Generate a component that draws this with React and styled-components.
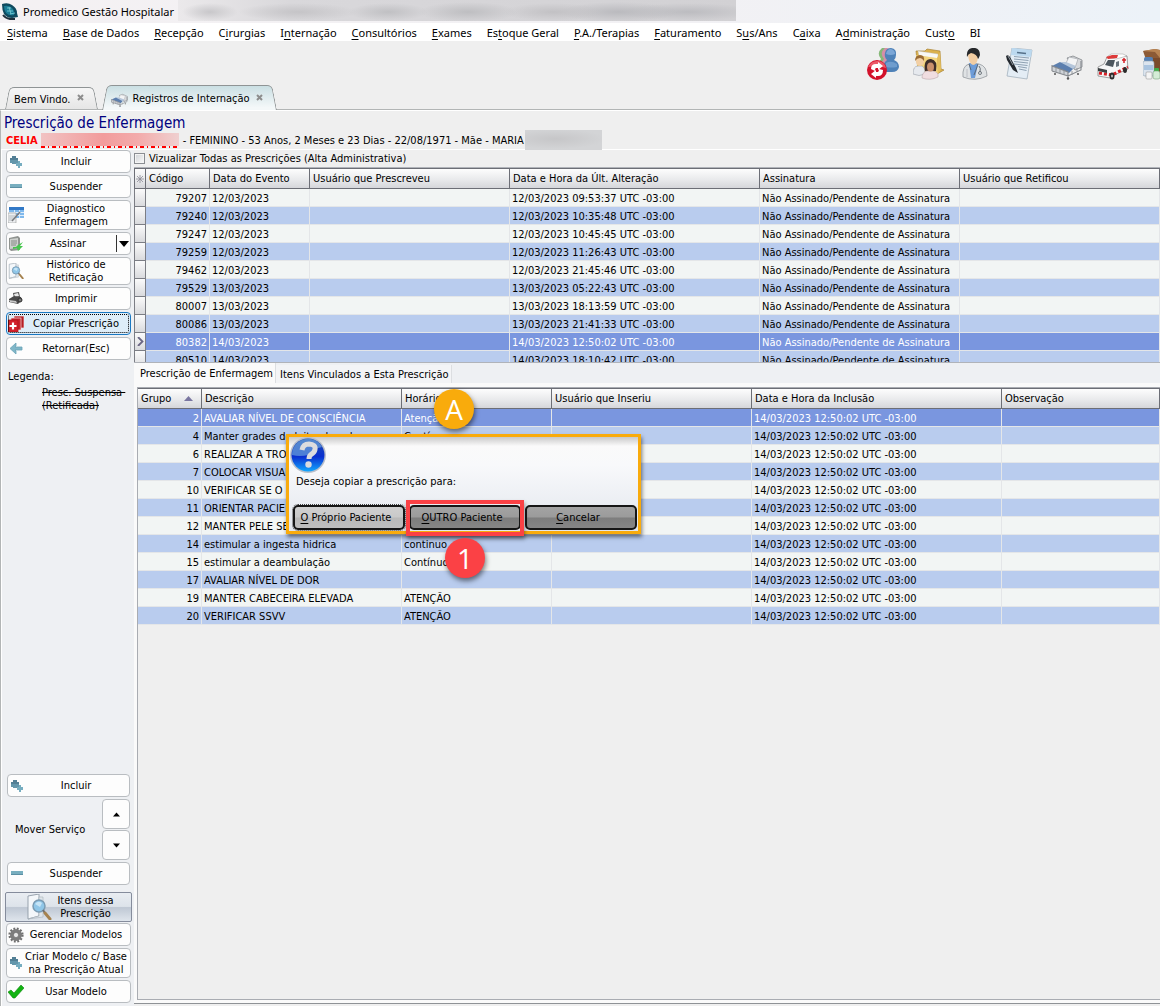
import React, { useState } from 'react';
import styled, { createGlobalStyle, css } from 'styled-components';

const menus = [
  ['', 'S', 'istema'],
  ['', 'B', 'ase de Dados'],
  ['', 'R', 'ecepção'],
  ['C', 'i', 'rurgias'],
  ['I', 'n', 'ternação'],
  ['', 'C', 'onsultórios'],
  ['', 'E', 'xames'],
  ['Es', 't', 'oque Geral'],
  ['', 'P', '.A./Terapias'],
  ['', 'F', 'aturamento'],
  ['S', 'u', 's/Ans'],
  ['C', 'a', 'ixa'],
  ['A', 'd', 'ministração'],
  ['Cust', 'o', ''],
  ['BI', '', ''],
];

const NOT_SIGNED = 'Não Assinado/Pendente de Assinatura';

const prescriptions = [
  { code: 79207, date: '12/03/2023', time: '09:53:37' },
  { code: 79240, date: '12/03/2023', time: '10:35:48' },
  { code: 79247, date: '12/03/2023', time: '10:45:45' },
  { code: 79259, date: '12/03/2023', time: '11:26:43' },
  { code: 79462, date: '12/03/2023', time: '21:45:46' },
  { code: 79529, date: '13/03/2023', time: '05:22:43' },
  { code: 80007, date: '13/03/2023', time: '18:13:59' },
  { code: 80086, date: '13/03/2023', time: '21:41:33' },
  { code: 80382, date: '14/03/2023', time: '12:50:02' },
  { code: 80510, date: '14/03/2023', time: '18:10:42' },
];

const items = [
  { group: 2, text: 'AVALIAR NÍVEL DE CONSCIÊNCIA', when: 'Atenção' },
  { group: 4, text: 'Manter grades do leito elevadas', when: 'Contínuo' },
  { group: 6, text: 'REALIZAR A TROCA', when: '' },
  { group: 7, text: 'COLOCAR VISUAL', when: '' },
  { group: 10, text: 'VERIFICAR SE O', when: '' },
  { group: 11, text: 'ORIENTAR PACIENTE', when: '' },
  { group: 12, text: 'MANTER PELE SECA', when: '' },
  { group: 14, text: 'estimular a ingesta hidrica', when: 'continuo' },
  { group: 15, text: 'estimular a deambulação', when: 'Contínuo' },
  { group: 17, text: 'AVALIAR NÍVEL DE DOR', when: '' },
  { group: 19, text: 'MANTER CABECEIRA ELEVADA', when: 'ATENÇÃO' },
  { group: 20, text: 'VERIFICAR SSVV', when: 'ATENÇÃO' },
];

/* ---------- icons ---------- */

const Logo = () => (
  <svg width="16" height="17" viewBox="0 0 16 17">
    <path d="M0 1 Q6 -1 10 2 Q15 5 15 10 L16 14 L10 15 Q5 15 2 11 Q0 7 0 1Z" fill="#0f4a5e" />
    <path d="M2 3 Q7 2 10 5 Q13 8 12 12 Q7 13 4 10 Q2 7 2 3Z" fill="#1b7d96" />
    <path d="M5 5 L9 5 M5 8 L11 8 M8 11 L13 10 M7 4 L9 11" stroke="#7fd0d8" strokeWidth=".8" fill="none" />
    <path d="M1 12 Q3 15 8 16 L13 16" stroke="#20303c" strokeWidth="1.800" fill="none" />
  </svg>
);

const UsersSync = () => (
  <svg width="32" height="32" viewBox="0 0 32 32">
    <path d="M15 0 Q20 -1 21 5 L20 20 H12 Q11 14 14 11 Q9 5 15 0Z" fill="#86b877" />
    <path d="M18 0 Q22 -1 24 5 L23 20 H15 Q14 14 17 11 Q12 5 18 0Z" fill="#d58fa8" />
    <path d="M24 0 Q30 1 29 7 Q29 10 27 12 Q32 14 32 19 Q31 24 25 24 H17 Q15 15 20 12 Q17 9 18 5 Q19 0 24 0Z" fill="#4f82b8" />
    <path d="M24 1 Q28 2 28 6 Q24 8 19 6 Q20 1 24 1Z" fill="#7ba6d6" />
    <path d="M19 15 Q24 12 30 16 L30 19 Q24 20 19 19Z" fill="#6f9dce" />
    <circle cx="10" cy="22" r="10" fill="#d3122b" />
    <path d="M1 19 Q4 12.500 11 13 Q18 14 19 20 Q12 17 1 19Z" fill="#ec5a68" />
    <path d="M4 21 Q4 16 9 16 H11 V14 L16 18 L11 22 V20 H9 Q8 20 8 23Z" fill="#fff" />
    <path d="M16 22 Q16 28 11 28 H9 V30 L4 26 L9 22 V24 H11 Q12 24 12 21Z" fill="#fff" />
  </svg>
);

const FolderUsers = () => (
  <svg width="32" height="32" viewBox="0 0 32 32">
    <path d="M3 3 L12 3 L14 1 L27 3 L28 21 L31 22 L24 26 L5 22Z" fill="#dcb24c" stroke="#a98436" strokeWidth=".7" />
    <path d="M5 3 L25 6 V11 L6 8Z" fill="#f8f8f4" stroke="#bbb" strokeWidth=".4" />
    <path d="M3 7 L24 10 L25 26 L5 23Z" fill="#f3d57e" />
    <path d="M24 10 L27 4 L28 21 L25 26Z" fill="#e4bf5f" />
    <path d="M0 26 Q0 18 5 18 H9 Q12 19 12 26 Q6 29 0 26Z" fill="#e6e9ee" stroke="#8d939c" strokeWidth=".5" />
    <ellipse cx="7" cy="13" rx="4" ry="5" fill="#f2cfa5" />
    <path d="M2 13 Q2 7 7 7 Q12 7 11 13 Q9 10 7 10 Q4 10 2 13Z" fill="#9a6b33" />
    <path d="M12 23 Q10 11 18 11 Q25 12 23 23Z" fill="#3d2d2a" />
    <path d="M9 30 Q9 24 14 23 H20 Q26 24 25 29 Q17 33 9 30Z" fill="#f0dde0" stroke="#b09a9e" strokeWidth=".5" />
    <ellipse cx="17.500" cy="19" rx="3.500" ry="4.500" fill="#c98f6c" />
  </svg>
);

const Doctor = () => (
  <svg width="32" height="32" viewBox="0 0 32 32">
    <path d="M4 29 Q3 18 10 16 L14 15 L20 16 Q28 18 28 28 Q16 34 4 29Z" fill="#dfe2e4" stroke="#878c92" strokeWidth=".7" />
    <path d="M10 15 L19 16 L16 30 L12 30Z" fill="#6d9cd8" />
    <path d="M9 7 Q9 3 14 3 Q19 3 19 9 Q18 17 14 17 Q10 16 9 7Z" fill="#f2cda2" />
    <path d="M8 9 Q7 1 13 0 Q21 -1 21 7 Q20 10 19 11 Q18 6 12 5 Q9 6 8 9Z" fill="#26282b" />
    <path d="M10 16 L12 22 M19 16 Q17 22 15 27 M20 18 Q22 20 21 24" stroke="#5a626b" strokeWidth=".9" fill="none" />
    <circle cx="21" cy="25" r="1.500" fill="none" stroke="#5a626b" strokeWidth=".8" />
    <path d="M8 21 V29" stroke="#b4b8bc" strokeWidth=".8" />
  </svg>
);

const Report = () => (
  <svg width="32" height="32" viewBox="0 0 32 32">
    <path d="M7 0 L27 2 L22 31 L2 28Z" fill="#e4edf5" stroke="#9aa9b6" strokeWidth=".7" />
    <path d="M7 0 L27 2 L26 9 L6 7Z" fill="#bcd9ef" />
    <path d="M12 4.500 L21 5.500" stroke="#56718a" strokeWidth="1.500" />
    <path d="M9 8.500 L24 10 M9 11 L23.500 12.500 M9 13.500 L23 15 M9 16 L22.500 17.500 M13 18.500 L22 20 M14 21 L21.500 22.500" stroke="#8397aa" strokeWidth=".9" />
    <path d="M1 8 Q3 6 5 9 L11 20 L13 25 L8 22 L2 12Z" fill="#23282e" />
    <path d="M3 8 L8 17" stroke="#9aa3ab" strokeWidth=".9" />
  </svg>
);

const Bed = ({ size = 32 }) => (
  <svg width={size} height={size} viewBox="0 0 32 32">
    <path d="M16 10 L22 8 L31 12 L31 19 L24 22Z" fill="#d7d9dc" stroke="#83868a" strokeWidth=".8" />
    <path d="M14 17 L18 9 L27 11 L24 20Z" fill="#f3f4f5" stroke="#9b9ea2" strokeWidth=".6" />
    <path d="M1 18 L9 14 L24 19 L18 25Z" fill="#5c7fae" />
    <path d="M9 14 L15 14 L25 18 L22 21Z" fill="#b5c6da" />
    <path d="M1 18 L17 24 V28 L1 23Z" fill="#cfd3d8" />
    <path d="M1 17 V23 M1 18 L17 24 V30 M1 23 L17 28 L30 22 V13" stroke="#83878c" strokeWidth="1.100" fill="none" />
    <path d="M5 20 V24 M9 21 V26 M13 22 V27 M21 23 V27 M26 20 V24" stroke="#8d9196" strokeWidth=".9" fill="none" />
    <circle cx="17" cy="30.500" r="1.200" fill="#555" />
    <circle cx="4" cy="26" r="1" fill="#555" />
    <circle cx="27" cy="26" r="1" fill="#555" />
  </svg>
);

const Ambulance = () => (
  <svg width="32" height="32" viewBox="0 0 32 32">
    <path d="M1 19 L7 16 L10 9 L14 7 L30 8 L31 21 L17 27 L13 30 L1 28Z" fill="#f7f7f7" stroke="#7d7d7d" strokeWidth=".7" />
    <path d="M10 9 L14 6 L26 6 L30 8 L19 11Z" fill="#fff" stroke="#999" strokeWidth=".5" />
    <path d="M9 9 L15 7 L21 7 L20 10 L11 11Z" fill="#dd3a3a" />
    <path d="M8 17 L11 12 L18 12 L16 19Z" fill="#4d565d" />
    <path d="M19 14 L22 13 V18 L19 19Z" fill="#6a747c" />
    <path d="M2 25 L15 27 L31 19" stroke="#d61f26" strokeWidth="3" strokeDasharray="3 2" fill="none" />
    <path d="M25 12 H29 M27 10 V15" stroke="#d61f26" strokeWidth="1.500" />
    <path d="M1 20 L10 22 L10 25 L1 23Z" fill="#3b3f42" />
    <ellipse cx="15" cy="28" rx="2.500" ry="3.500" fill="#2b2b2b" />
    <ellipse cx="28" cy="22" rx="2" ry="3" fill="#2b2b2b" />
    <ellipse cx="15" cy="28" rx="1" ry="1.500" fill="#bbb" />
  </svg>
);

const Pharmacy = () => (
  <svg width="17" height="32" viewBox="0 0 17 32">
    <path d="M0 3 L12 1 L17 2 V26 L6 20Z" fill="#8c5a35" />
    <path d="M0 3 L12 4 L17 10 V2 L12 1Z" fill="#b98452" />
    <path d="M8 10 L17 10 V26 L8 22Z" fill="#7a4a2a" />
    <rect x="1" y="9" width="9" height="5" rx="2" fill="#5580b4" />
    <rect x="0" y="13" width="11" height="15" rx="2" fill="#dbe4ee" stroke="#8ea2b4" strokeWidth=".6" />
    <rect x="1" y="17" width="9" height="5" fill="#a9c4e0" />
    <rect x="11" y="20" width="5" height="4" rx="1" fill="#3fae49" />
    <rect x="10" y="23" width="7" height="8" rx="2" fill="#d5ecd7" stroke="#7aa57d" strokeWidth=".6" />
    <rect x="3" y="24" width="6" height="7" rx="1" fill="#f4f4f4" stroke="#888" strokeWidth=".5" />
  </svg>
);

const IconPlus = () => (
  <svg width="16" height="16" viewBox="0 0 16 16">
    <path d="M4 2 H8 V4 H10 V9 H8 V10 H4 V9 H2 V4 H4Z" fill="#6396ab" />
    <path d="M4 2 H8 V4 H10 V6 H2 V4 H4Z" fill="#527f95" />
    <path d="M10 7 H12 V9 H14 V12 H12 V14 H10 V12 H8 V9 H10Z" fill="#76adc0" />
  </svg>
);

const IconMinus = () => (
  <svg width="16" height="16" viewBox="0 0 16 16">
    <rect x="2" y="5" width="12" height="4" fill="#78aebf" />
    <path d="M2 8.500 H14" stroke="#5b8fa3" />
  </svg>
);

const IconTable = () => (
  <svg width="16" height="16" viewBox="0 0 16 16">
    <rect x="1" y="0" width="15" height="11" fill="#7fb8ec" />
    <path d="M1 0 H16 V3 H1Z" fill="#3178c6" />
    <path d="M1 5.500 H16 M1 8.500 H16 M6.500 3 V11 M11.500 3 V11" stroke="#e8f3fd" strokeWidth=".9" />
    <path d="M0 6 H8 V16 H0Z" fill="#eceef0" stroke="#999" strokeWidth=".6" />
    <path d="M1 9 H7 M1 11 H6 M1 13 H5" stroke="#a9adb2" strokeWidth=".8" />
    <path d="M12 5 L4 14" stroke="#77797c" strokeWidth="1.500" />
  </svg>
);

const IconSign = () => (
  <svg width="16" height="16" viewBox="0 0 16 16">
    <path d="M1 2 L10 0 L12 2 V14 L3 15 L1 13Z" fill="#8f9390" />
    <path d="M2 3 L10 2 V12 L2 13Z" fill="#cdd0cd" />
    <path d="M3 5 H9 M3 7 H9 M3 9 H8" stroke="#7f8480" strokeWidth=".9" />
    <path d="M5 11 L8 11 L10 9 L15 6 L12 10 H15 L10 15 L9 12 L5 13Z" fill="#45c64c" />
  </svg>
);

const IconSearchDoc = ({ size = 16 }) => (
  <svg width={size} height={size} viewBox="0 0 26 26">
    <path d="M2 2 L13 0 V22 L2 25Z" fill="#f4f7fa" stroke="#8e9aa6" strokeWidth=".9" />
    <path d="M13 3 H17 V23 L2 25 L13 22Z" fill="#dfe5ea" stroke="#a7b1bb" strokeWidth=".6" />
    <circle cx="13" cy="12" r="6" fill="#8fc6e8" stroke="#7a9bb3" strokeWidth="1.500" />
    <path d="M9 10 Q12 6 16 9 L14 13Z" fill="#c5e4f6" />
    <path d="M17 16 L19 19" stroke="#6d6f72" strokeWidth="2" />
    <path d="M19 19 L24 25" stroke="#a5824f" strokeWidth="3" strokeLinecap="round" />
  </svg>
);

const IconPrint = () => (
  <svg width="16" height="16" viewBox="0 0 16 16">
    <path d="M5 2 L11 1 L12 6 L6 7Z" fill="#555" />
    <path d="M6 3 L10 2 L11 5 L7 6Z" fill="#e8e8e8" />
    <path d="M1 8 L6 5 L13 6 L14 9 L10 13 L1 11Z" fill="#4a4a4a" />
    <path d="M1 9 L8 10 L9 12 L2 11Z" fill="#c9c9c9" />
    <circle cx="12" cy="9" r="2" fill="#7a7a7a" stroke="#2e2e2e" />
  </svg>
);

const IconCopy = () => (
  <svg width="16" height="16" viewBox="0 0 16 16">
    <rect x="6" y="0" width="10" height="12" fill="#b51f26" stroke="#f3dede" strokeWidth=".7" />
    <rect x="3" y="2" width="10" height="12" fill="#c8242c" stroke="#f3dede" strokeWidth=".7" />
    <rect x="0" y="4" width="10" height="12" fill="#d2202a" stroke="#a81218" strokeWidth=".7" />
    <path d="M5 6.500 V13.500 M1.500 10 H8.500" stroke="#fff" strokeWidth="2.200" />
  </svg>
);

const IconBack = () => (
  <svg width="16" height="16" viewBox="0 0 16 16">
    <path d="M8 2 L2 7.500 L8 13 V10 L7 9 H14 V6 H7 L8 5Z" fill="#7fb6c8" stroke="#6ba3b6" strokeWidth=".8" />
  </svg>
);

const IconGear = () => (
  <svg width="16" height="16" viewBox="0 0 16 16">
    <circle cx="8" cy="8" r="6.300" fill="none" stroke="#6f6f6f" strokeWidth="2.600" strokeDasharray="1.800 1.500" />
    <circle cx="8" cy="8" r="4.200" fill="none" stroke="#7d7d7d" strokeWidth="3.600" />
    <circle cx="8" cy="8" r="2.600" fill="#e6e6e6" stroke="#555" strokeWidth=".6" />
  </svg>
);

const IconCheck = () => (
  <svg width="16" height="16" viewBox="0 0 16 16">
    <path d="M0 8 L3 6 L6 9 L13 1 L16 4 L7 14 L5 14Z" fill="#12b312" stroke="#0b870b" strokeWidth=".6" />
  </svg>
);

const Caret = ({ up }) => (
  <svg width="9" height="5" viewBox="0 0 9 5">
    <path d={up ? 'M4.500 .5 L8 4.500 H1Z' : 'M1 .5 H8 L4.500 4.500Z'} fill="#000" />
  </svg>
);

const SplitCaret = () => (
  <svg width="10" height="6" viewBox="0 0 10 6">
    <path d="M0 0 H10 L5 6Z" fill="#000" />
  </svg>
);

const SortMark = () => (
  <svg width="9" height="5" viewBox="0 0 9 5">
    <path d="M4.500 0 L9 5 H0Z" fill="#7a76a0" />
  </svg>
);

const CloseMark = () => (
  <svg width="7" height="7" viewBox="0 0 7 7">
    <path d="M1 1 L6 6 M6 1 L1 6" stroke="#8d8d8d" strokeWidth="2" />
  </svg>
);

const StarMark = () => (
  <svg width="8" height="8" viewBox="0 0 8 8">
    <path d="M4 0 V8 M0 4 H8 M1 1 L7 7 M7 1 L1 7" stroke="#8c8a96" strokeWidth=".8" />
  </svg>
);

const RowPointer = () => (
  <svg width="7" height="9" viewBox="0 0 7 9">
    <path d="M1 0 L5.500 4.500 L1 9" stroke="#6a6684" strokeWidth="1.800" fill="none" />
  </svg>
);

const Question = () => (
  <svg width="36" height="36" viewBox="0 0 36 36">
    <defs>
      <linearGradient id="ball" x1="0" y1="0" x2="0" y2="1">
        <stop offset="0" stopColor="#1d4fae" />
        <stop offset=".55" stopColor="#0a2fd0" />
        <stop offset="1" stopColor="#12a8ff" />
      </linearGradient>
    </defs>
    <circle cx="18" cy="18" r="18" fill="#b9bfca" />
    <circle cx="18" cy="18" r="16.500" fill="url(#ball)" />
    <path d="M2 18 A16 16 0 0 1 32 10 Q22 12 18 18 Q10 20 2 18Z" fill="#6a9fdc" opacity=".7" />
    <path d="M12 13 Q13 7 19 7 Q26 7.500 25 12.500 Q24.500 15.500 21 17.500 Q19 19 19 22" fill="none" stroke="#dcdcde" strokeWidth="5" />
    <circle cx="18.500" cy="27.500" r="3.200" fill="#dcdcde" />
  </svg>
);

/* ---------- page ---------- */

function Hotkey({ parts }) {
  return <>{parts[0]}<u>{parts[1]}</u>{parts[2]}</>;
}

function SideAction({ icon, children, height, active }) {
  return (
    <SideButton type="button" $height={height} $active={active}>
      {icon}
      <SideLabel>{children}</SideLabel>
    </SideButton>
  );
}

function App() {
  const [showAll, setShowAll] = useState(false);

  return (
    <Window>
      <GlobalStyle />
      <TitleBar>
        <Logo />
        <span>Promedico Gestão Hospitalar</span>
        <HiddenTitle />
      </TitleBar>
      <MenuBar>
        {menus.map(parts => (
          <MenuItem key={parts.join('')} type="button"><Hotkey parts={parts} /></MenuItem>
        ))}
      </MenuBar>
      <Toolbar>
        <ToolButton type="button" aria-label="Trocar usuário"><UsersSync /></ToolButton>
        <ToolButton type="button" aria-label="Pacientes"><FolderUsers /></ToolButton>
        <ToolButton type="button" aria-label="Médicos"><Doctor /></ToolButton>
        <ToolButton type="button" aria-label="Laudos"><Report /></ToolButton>
        <ToolButton type="button" aria-label="Internação"><Bed /></ToolButton>
        <ToolButton type="button" aria-label="Ambulância"><Ambulance /></ToolButton>
        <ToolButton type="button" aria-label="Farmácia"><Pharmacy /></ToolButton>
      </Toolbar>
      <TabStrip>
        <WindowTab>
          <TabName type="button">Bem Vindo.</TabName>
          <TabClose type="button" aria-label="Fechar Bem Vindo"><CloseMark /></TabClose>
        </WindowTab>
        <WindowTab $active>
          <Bed size={17} />
          <TabName type="button">Registros de Internação</TabName>
          <TabClose type="button" aria-label="Fechar Registros de Internação"><CloseMark /></TabClose>
        </WindowTab>
      </TabStrip>

      <Page>
        <PageHead>
          <Heading>Prescrição de Enfermagem</Heading>
          <Patient>
            <PatientName>CELIA</PatientName>
            <HiddenName />
            <span>- FEMININO - 53 Anos, 2 Meses e 23 Dias - 22/08/1971 - Mãe - MARIA</span>
            <HiddenMother />
          </Patient>
        </PageHead>
        <Body>
          <Sidebar>
            <SideAction icon={<IconPlus />}>Incluir</SideAction>
            <SideAction icon={<IconMinus />}>Suspender</SideAction>
            <SideAction icon={<IconTable />} height={30}>Diagnostico<br />Enfermagem</SideAction>
            <SplitButton>
              <SplitMain type="button">
                <IconSign />
                <SideLabel>Assinar</SideLabel>
              </SplitMain>
              <SplitArrow type="button" aria-label="Mais opções de assinatura"><SplitCaret /></SplitArrow>
            </SplitButton>
            <SideAction icon={<IconSearchDoc />} height={28}>Histórico de<br />Retificação</SideAction>
            <SideAction icon={<IconPrint />}>Imprimir</SideAction>
            <SideAction icon={<IconCopy />} active>Copiar Prescrição</SideAction>
            <SideAction icon={<IconBack />}>Retornar(Esc)</SideAction>
            <Legend>
              Legenda:
              <Struck>{'Presc. Suspensa \n(Retificada)'}</Struck>
            </Legend>

            <ItemTools>
              <SideAction icon={<IconPlus />}>Incluir</SideAction>
              <MoveRow>
                <span>Mover Serviço</span>
                <MoveButtons>
                  <MoveButton type="button" aria-label="Mover para cima"><Caret up /></MoveButton>
                  <MoveButton type="button" aria-label="Mover para baixo"><Caret /></MoveButton>
                </MoveButtons>
              </MoveRow>
              <SideAction icon={<IconMinus />}>Suspender</SideAction>
            </ItemTools>
            <ItemsButton type="button">
              <IconSearchDoc size={26} />
              <SideLabel>Itens dessa<br />Prescrição</SideLabel>
            </ItemsButton>
            <SideAction icon={<IconGear />}>Gerenciar Modelos</SideAction>
            <SideAction icon={<IconPlus />} height={30}>Criar Modelo c/ Base<br />na Prescrição Atual</SideAction>
            <SideAction icon={<IconCheck />}>Usar Modelo</SideAction>
          </Sidebar>

          <Main>
            <ShowAll>
              <input type="checkbox" checked={showAll} onChange={e => setShowAll(e.target.checked)} />
              Vizualizar Todas as Prescrições (Alta Administrativa)
            </ShowAll>
            <PrescriptionPane>
              <Grid>
                <colgroup>
                  <Col $w={12} />
                  <Col $w={64} />
                  <Col $w={100} />
                  <Col $w={200} />
                  <Col $w={250} />
                  <Col $w={200} />
                  <col />
                </colgroup>
                <thead>
                  <tr>
                    <Th $mark aria-label="Linha atual"><StarMark /></Th>
                    <Th>Código</Th>
                    <Th>Data do Evento</Th>
                    <Th>Usuário que Prescreveu</Th>
                    <Th>Data e Hora da Últ. Alteração</Th>
                    <Th>Assinatura</Th>
                    <Th>Usuário que Retificou</Th>
                  </tr>
                </thead>
                <tbody>
                  {prescriptions.map(p => (
                    <Row key={p.code} $selected={p.code === 80382}>
                      <MarkCell>{p.code === 80382 && <RowPointer />}</MarkCell>
                      <Td $right>{p.code}</Td>
                      <Td>{p.date}</Td>
                      <Td />
                      <Td>{p.date} {p.time} UTC -03:00</Td>
                      <Td>{NOT_SIGNED}</Td>
                      <Td />
                    </Row>
                  ))}
                </tbody>
              </Grid>
            </PrescriptionPane>

            <DetailTabs role="tablist">
              <DetailTab type="button" role="tab" aria-selected="true" $active>Prescrição de Enfermagem</DetailTab>
              <DetailTab type="button" role="tab" aria-selected="false">Itens Vinculados a Esta Prescrição</DetailTab>
            </DetailTabs>
            <DetailPanel>
              <DetailFrame>
                <Grid>
                  <colgroup>
                    <Col $w={64} />
                    <Col $w={200} />
                    <Col $w={150} />
                    <Col $w={200} />
                    <Col $w={250} />
                    <col />
                  </colgroup>
                  <thead>
                    <tr>
                      <Th><SortHead>Grupo <SortMark /></SortHead></Th>
                      <Th>Descrição</Th>
                      <Th>Horário</Th>
                      <Th>Usuário que Inseriu</Th>
                      <Th>Data e Hora da Inclusão</Th>
                      <Th>Observação</Th>
                    </tr>
                  </thead>
                  <tbody>
                    {items.map(item => (
                      <Row key={item.group} $selected={item.group === 2}>
                        <Td $right>{item.group}</Td>
                        <Td>{item.text}</Td>
                        <Td>{item.when}</Td>
                        <Td />
                        <Td>14/03/2023 12:50:02 UTC -03:00</Td>
                        <Td />
                      </Row>
                    ))}
                  </tbody>
                </Grid>
              </DetailFrame>
            </DetailPanel>
          </Main>
        </Body>
      </Page>

      <Dialog role="dialog" aria-label="Copiar prescrição">
        <StepA>A</StepA>
        <Question />
        <Message>Deseja copiar a prescrição para:</Message>
        <DialogButtons>
          <DialogButton type="button" $default><Hotkey parts={['', 'O', ' Próprio Paciente']} /></DialogButton>
          <Highlight>
            <DialogButton type="button"><Hotkey parts={['', 'O', 'UTRO Paciente']} /></DialogButton>
            <StepOne>1</StepOne>
          </Highlight>
          <DialogButton type="button"><Hotkey parts={['', 'C', 'ancelar']} /></DialogButton>
        </DialogButtons>
      </Dialog>
    </Window>
  );
}

const GlobalStyle = createGlobalStyle`
  *, *::before, *::after {
    box-sizing: border-box;
  }

  body {
    margin: 0;
    background: #efefef;
    color: #000;
    font: 11px/13px "DejaVu Sans Condensed", Tahoma, sans-serif;
  }

  button {
    margin: 0;
    padding: 0;
    border: 0;
    background: none;
    color: inherit;
    font: inherit;
  }

  svg {
    display: block;
    flex: none;
  }
`

const Window = styled.div`
  position: relative;
  display: flex;
  flex-direction: column;
  min-height: 100vh;
  overflow: hidden;
`

const TitleBar = styled.header`
  display: flex;
  align-items: center;
  height: 23px;
  padding-left: 2px;
  background: linear-gradient(90deg, #f4f1f3, #f2f1f4 60%, #ecf2f8);
  font-family: "Noto Sans", sans-serif;

  span {
    margin-left: 5px;
    white-space: nowrap;
  }
`

const HiddenTitle = styled.div`
  flex: 0 1 558px;
  align-self: flex-start;
  height: 21px;
  margin-left: 4px;
  background:
    radial-gradient(ellipse 28px 9px at 32px 12px, #c8c7ca, transparent),
    radial-gradient(ellipse 60px 9px at 120px 12px, #c5c4c7, transparent),
    radial-gradient(ellipse 40px 9px at 210px 12px, #c0c0c3, transparent),
    radial-gradient(ellipse 50px 10px at 290px 12px, #bebec1, transparent),
    radial-gradient(ellipse 50px 9px at 375px 12px, #c2c1c4, transparent),
    radial-gradient(ellipse 60px 10px at 440px 12px, #bababe, transparent),
    radial-gradient(ellipse 70px 9px at 510px 12px, #bcbcc0, transparent),
    linear-gradient(90deg, #ebe9eb, #d9d8db 20%, #d2d1d4);
`

const MenuBar = styled.nav`
  display: flex;
  gap: 15px;
  height: 18px;
  padding-left: 7px;
  background: #fff;
  font: 11px/20px "Noto Sans", sans-serif;
`

const MenuItem = styled.button`
  white-space: nowrap;

  u {
    text-underline-offset: 2px;
  }
`

const Toolbar = styled.div`
  display: flex;
  justify-content: flex-end;
  gap: 14px;
  height: 44px;
  padding-top: 7px;
`

const ToolButton = styled.button`
  height: 32px;
`

const TabStrip = styled.div`
  display: flex;
  align-items: flex-end;
  gap: 4px;
  height: 25px;
  padding-left: 5px;
  border-bottom: 1px solid #b2b5b5;
`

const WindowTab = styled.div`
  position: relative;
  display: flex;
  align-items: center;
  height: ${p => (p.$active ? 25 : 22)}px;
  margin-bottom: ${p => (p.$active ? -1 : 0)}px;
  padding: 2px 14px 0 9px;

  &::before,
  &::after {
    content: "";
    position: absolute;
    top: 0;
    bottom: 0;
    border: 1px solid #8f9495;
    border-bottom: 0;
    background: ${p => (p.$active ? 'linear-gradient(#cadfe3, #f4f8f9 90%)' : 'linear-gradient(#f6f6f6, #e6e6e6)')};
  }

  &::before {
    left: 0;
    right: 50%;
    border-right: 0;
    border-radius: 5px 0 0 0;
    transform: skewX(-11deg);
    transform-origin: bottom;
  }

  &::after {
    left: 30%;
    right: 0;
    border-left: 0;
    border-radius: 0 5px 0 0;
    transform: skewX(11deg);
    transform-origin: bottom;
  }

  > * {
    position: relative;
    z-index: 1;
  }
`

const TabName = styled.button`
  white-space: nowrap;

  svg + & {
    margin-left: 5px;
  }
`

const TabClose = styled.button`
  margin-left: 6px;
  padding-bottom: 3px;
`

const Page = styled.main`
  flex: 1;
  display: flex;
  flex-direction: column;
  border-top: 1px solid #fff;
  border-left: 1px solid #b2b5b5;
`

const PageHead = styled.div`
  height: 39px;
  padding-top: 3px;
  border-bottom: 1px solid #fff;
`

const Heading = styled.h1`
  margin: 0;
  padding-left: 3px;
  color: #00007f;
  font-size: 15px;
  font-weight: normal;
  line-height: 18px;
`

const Patient = styled.div`
  display: flex;
  align-items: center;
  height: 16px;
  padding-left: 5px;
  white-space: nowrap;
`

const PatientName = styled.strong`
  color: #f00;
`

const HiddenName = styled.span`
  width: 138px;
  height: 15px;
  margin: 0 4px 0 3px;
  background:
    repeating-linear-gradient(90deg, #f00 0 4px, transparent 4px 7px, #f00 7px 8px, transparent 8px 11px) 0 100% / 100% 2px no-repeat,
    linear-gradient(90deg, #f1c3c3, #f29c9c 45%, #f3abab 70%, #efd0d0) 0 0 / 100% 13px no-repeat;
`

const HiddenMother = styled.span`
  width: 77px;
  height: 20px;
  margin-left: 1px;
  background: radial-gradient(ellipse 50px 10px at 30px 9px, #c6c6c8, #d3d4d6);
`

const Body = styled.div`
  flex: 1;
  display: flex;
`

const Sidebar = styled.aside`
  flex: none;
  display: flex;
  flex-direction: column;
  gap: 2px;
  width: 133px;
  padding: 0 3px 3px 4px;
  border-left: 1px solid #fff;
  background: #eef0f3;
`

const buttonFace = css`
  border: 1px solid #b9bdc1;
  border-radius: 4px;
  background: #fdfdfd;
`

const SideButton = styled.button`
  ${buttonFace}
  display: flex;
  align-items: center;
  flex: none;
  height: ${p => p.$height || 23}px;
  padding: 0 2px 0 1px;

  ${p => p.$active && css`
    border-color: #1a78c2;
    background: #deedf8;
    outline: 1px dotted #000;
    outline-offset: -3px;
  `}
`

const SideLabel = styled.span`
  flex: 1;
  text-align: center;
  white-space: nowrap;
`

const SplitButton = styled.div`
  ${buttonFace}
  display: flex;
  align-items: center;
  height: 23px;
`

const SplitMain = styled.button`
  flex: 1;
  display: flex;
  align-items: center;
  padding: 0 4px 0 1px;
`

const SplitArrow = styled.button`
  display: flex;
  justify-content: center;
  align-items: center;
  width: 14px;
  height: 17px;
  border-left: 1px solid #333;
`

const Legend = styled.div`
  margin: 8px 0 0 2px;
`

const Struck = styled.s`
  display: block;
  margin: 3px 0 0 34px;
  white-space: pre;
`

const ItemTools = styled.div`
  display: flex;
  flex-direction: column;
  gap: 2px;
  margin: auto 1px 5px;
`

const MoveRow = styled.div`
  display: flex;
  align-items: center;
  justify-content: space-between;
  padding-left: 8px;
`

const MoveButtons = styled.div`
  display: flex;
  flex-direction: column;
  gap: 1px;
`

const MoveButton = styled.button`
  ${buttonFace}
  display: flex;
  justify-content: center;
  align-items: center;
  width: 28px;
  height: 30px;
`

const ItemsButton = styled.button`
  display: flex;
  align-items: center;
  height: 30px;
  margin: 0 -1px -1px;
  padding: 0 12px 0 20px;
  border: 1px solid #858c9c;
  border-radius: 2px;
  background: linear-gradient(#e9edf2, #dde3ea 48%, #bfc8d4 52%, #dfe5ec);
`

const Main = styled.section`
  flex: 1;
  display: flex;
  flex-direction: column;
  min-width: 0;
  padding-bottom: 2px;
`

const ShowAll = styled.label`
  display: flex;
  align-items: center;
  gap: 4px;
  height: 17px;

  input {
    appearance: none;
    width: 11px;
    height: 11px;
    margin: 0;
    border: 1px solid #8a8d92;
    background: linear-gradient(135deg, #cfd2d6, #fafafa);
    box-shadow: inset 0 0 0 1px #f4f4f4;
  }

  input:checked {
    background: #4a6fb5;
  }
`

const PrescriptionPane = styled.div`
  height: 196px;
  overflow: hidden;
  border-top: 1px solid #b0b3b9;
  border-bottom: 1px solid #b0b3b9;
`

const Grid = styled.table`
  width: 100%;
  table-layout: fixed;
  border-spacing: 0;
`

const Col = styled.col`
  width: ${p => p.$w}px;
`

const Th = styled.th`
  height: 21px;
  padding: 0 ${p => (p.$mark ? 1 : 3)}px;
  border: solid #6c6e76;
  border-width: 1px 1px 1px 0;
  background: linear-gradient(#fdfdfd, #e9eaec 55%, #d5d6da);
  font-weight: normal;
  text-align: left;
  white-space: nowrap;

  &:first-child {
    border-left: ${p => (p.$mark ? '1px solid #6c6e76' : 0)};
  }
`

const SortHead = styled.span`
  display: flex;
  align-items: center;
  justify-content: space-between;
  padding-right: 5px;
`

const Td = styled.td`
  height: 18px;
  padding: 1px 2px 0;
  overflow: hidden;
  border-right: 1px solid #e4e6e8;
  border-bottom: 1px solid #e4e6e8;
  text-align: ${p => (p.$right ? 'right' : 'left')};
  white-space: nowrap;
`

const MarkCell = styled.td`
  height: 18px;
  padding: 0 2px;
  border: solid #7b7d84;
  border-width: 0 1px 1px;
  background: linear-gradient(#fbfbfb, #d9dadd);
`

const Row = styled.tr`
  background: #f2f5f4;

  &:nth-child(even) {
    background: #b9ccee;
  }

  ${p => p.$selected && css`
    && {
      background: #7a96df;
      color: #fff;
    }
  `}
`

const DetailTabs = styled.div`
  display: flex;
  align-items: flex-start;
  height: 20px;
  background: #eef0f3;
`

const DetailTab = styled.button`
  height: ${p => (p.$active ? 20 : 18)}px;
  margin-top: ${p => (p.$active ? 0 : 2)}px;
  padding: 0 2px 0 ${p => (p.$active ? 6 : 4)}px;
  border-right: 1px solid #dcdee1;
  background: ${p => (p.$active ? '#fafafa' : '#f3f4f6')};
  white-space: nowrap;
`

const DetailPanel = styled.div`
  flex: 1;
  display: flex;
  flex-direction: column;
  padding: 4px 0 3px 3px;
  border-bottom: 1px solid #8f9296;
  background: #fafafa;
`

const DetailFrame = styled.div`
  flex: 1;
  border: solid #a9acb2;
  border-width: 1px 0 1px 1px;
  background: #efefef;
`

const Dialog = styled.div`
  position: absolute;
  top: 434px;
  left: 286px;
  padding: 0 1px 1px 1px;
  border: 3px solid #f9ab0c;
  background: linear-gradient(#c9c9c9, #fafafa 9px, #f8f9fb 30%, #e2e6ed);
  box-shadow: 1px 3px 4px rgba(0, 0, 0, .5);
`

const Message = styled.p`
  margin: 0 0 14px 6px;
  line-height: 18px;
`

const DialogButtons = styled.div`
  display: flex;
  gap: 4px;
  padding-left: 3px;
`

const DialogButton = styled.button`
  width: 112px;
  height: 25px;
  padding-right: 6px;
  border: 2px solid #161616;
  border-radius: 5px;
  background: ${p => (p.$default
    ? 'linear-gradient(#d0d0d0, #c9c9c9 48%, #b9b9b9 52%, #bebebe)'
    : 'linear-gradient(#a3a3a3, #9b9b9b 48%, #7d7d7d 52%, #868686)')};
  outline: ${p => (p.$default ? '1px dotted #444' : 'none')};
  white-space: nowrap;

  u {
    text-underline-offset: 2px;
  }
`

const Highlight = styled.div`
  position: relative;

  &::after {
    content: "";
    position: absolute;
    inset: -5px -3px -6px;
    border: 4px solid #fb4145;
    box-shadow: 1px 3px 4px rgba(0, 0, 0, .4);
    pointer-events: none;
  }
`

const Step = styled.span`
  position: absolute;
  z-index: 1;
  width: 40px;
  height: 40px;
  border-radius: 50%;
  color: #fff;
  font: 28px/40px "Open Sans", "Segoe UI", sans-serif;
  text-align: center;
  box-shadow: 1px 3px 5px rgba(0, 0, 0, .5);
`

const StepA = styled(Step)`
  top: -48px;
  left: 145px;
  background: #f9ab0c;
`

const StepOne = styled(Step)`
  top: 33px;
  left: 36px;
  background: #fb4145;
`

export default App
